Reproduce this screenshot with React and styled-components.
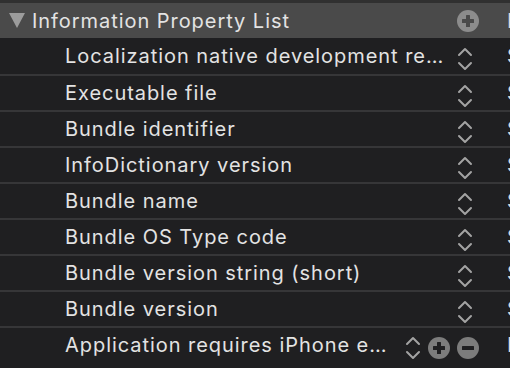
import React from "react";
import styled, { createGlobalStyle } from "styled-components";

const Global = createGlobalStyle`
  html, body { margin: 0; padding: 0; background: #1f1f21; }
  body { font-family: Inter, "Noto Sans", "Liberation Sans", sans-serif; }
`;

const Editor = styled.div`
  width: 510px;
  height: 368px;
  overflow: hidden;
  background: #1f1f21;
  border-top: 3px solid #303030;
  box-sizing: border-box;
`;

const Row = styled.div`
  display: flex;
  align-items: stretch;
  height: ${(p) => (p.$header ? 35 : p.$first ? 36 : 34)}px;
  background: ${(p) => (p.$header ? "#4a4a4a" : "#1f1f21")};
  border-top: ${(p) => (p.$header || p.$first ? "none" : "2px solid #363638")};
`;

const KeyCell = styled.div`
  width: 498px;
  flex: none;
  display: flex;
  align-items: center;
  padding-left: ${(p) => (p.$header ? 9 : 65)}px;
  padding-right: 19px;
  box-sizing: border-box;
  gap: 6px;
`;

const Label = styled.span`
  flex: 1;
  min-width: 0;
  white-space: nowrap;
  overflow: hidden;
  font-size: 20px;
  color: #e3e3e3;
  letter-spacing: 0.95px;
`;

const TypeCell = styled.div`
  flex: 1;
  display: flex;
  align-items: center;
  padding-left: 9px;
  font-size: 20px;
  color: #d8d8d8;
  white-space: nowrap;
  overflow: hidden;
`;

const Controls = styled.div`
  display: flex;
  align-items: center;
  gap: 7px;
  flex: none;
  margin-top: ${(p) => (p.$header ? 0 : 6)}px;
  margin-right: ${(p) => (p.$inset ? 6 : 0)}px;
`;

const Triangle = styled.span`
  width: 0;
  height: 0;
  border-left: 8px solid transparent;
  border-right: 8px solid transparent;
  border-top: 15px solid #9c9c9c;
  margin-right: 1px;
  flex: none;
`;

const Stepper = () => (
  <svg width="16" height="24" viewBox="0 0 16 24" fill="none" stroke="#a3a3a3" strokeWidth="2" strokeLinecap="round" strokeLinejoin="round">
    <polyline points="2,8 8,2 14,8" />
    <polyline points="2,16 8,22 14,16" />
  </svg>
);

const RoundButton = ({ minus, color, glyph }) => (
  <svg width="22" height="22" viewBox="0 0 22 22">
    <circle cx="11" cy="11" r="11" fill={color} />
    <rect x="5" y="9" width="12" height="4" rx="0.5" fill={glyph} />
    {!minus && <rect x="9" y="5" width="4" height="12" rx="0.5" fill={glyph} />}
  </svg>
);

const items = [
  ["Localization native development re…", "String"],
  ["Executable file", "String"],
  ["Bundle identifier", "String"],
  ["InfoDictionary version", "String"],
  ["Bundle name", "String"],
  ["Bundle OS Type code", "String"],
  ["Bundle version string (short)", "String"],
  ["Bundle version", "String"],
  ["Application requires iPhone e…", "Boolean", true],
];

export default function App() {
  return (
    <>
      <Global />
      <Editor>
        <Row $header>
          <KeyCell $header>
            <Triangle />
            <Label>Information Property List</Label>
            <Controls $header>
              <RoundButton color="#8c8c8c" glyph="#4a4a4a" />
            </Controls>
          </KeyCell>
          <TypeCell>Dictionary</TypeCell>
        </Row>
        {items.map(([name, type, selected], i) => (
          <Row key={name} $first={i === 0}>
            <KeyCell>
              <Label>{name}</Label>
              <Controls $inset={!selected}>
                <Stepper />
                {selected && (
                  <>
                    <RoundButton color="#7c7c7c" glyph="#1f1f21" />
                    <RoundButton minus color="#7c7c7c" glyph="#1f1f21" />
                  </>
                )}
              </Controls>
            </KeyCell>
            <TypeCell>{type}</TypeCell>
          </Row>
        ))}
      </Editor>
    </>
  );
}
